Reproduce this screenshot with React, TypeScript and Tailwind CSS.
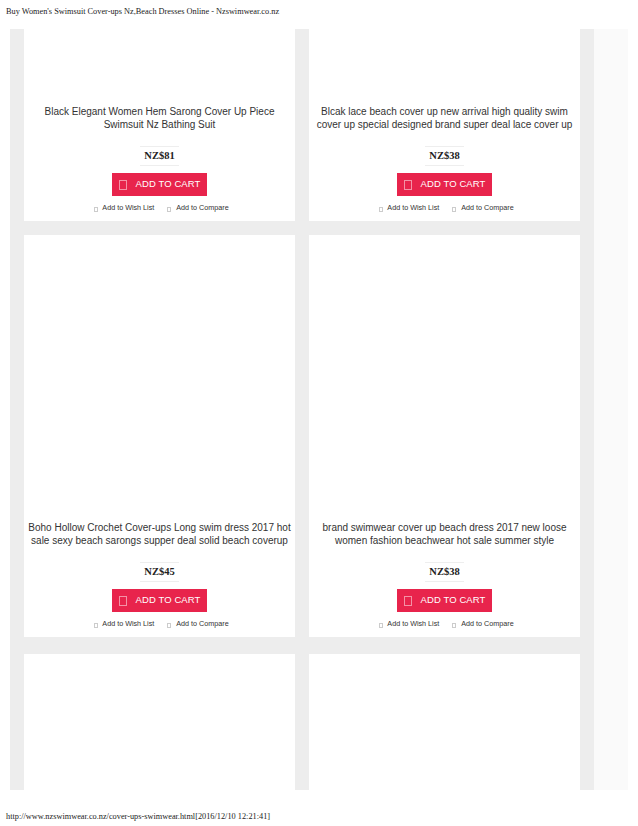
import React from 'react';

interface Product {
  title: string[];
  price: string;
}

const rowOne: Product[] = [
  { title: ['Black Elegant Women Hem Sarong Cover Up Piece', 'Swimsuit Nz Bathing Suit'], price: 'NZ$81' },
  { title: ['Blcak lace beach cover up new arrival high quality swim', 'cover up special designed brand super deal lace cover up'], price: 'NZ$38' },
];

const rowTwo: Product[] = [
  { title: ['Boho Hollow Crochet Cover-ups Long swim dress 2017 hot', 'sale sexy beach sarongs supper deal solid beach coverup'], price: 'NZ$45' },
  { title: ['brand swimwear cover up beach dress 2017 new loose', 'women fashion beachwear hot sale summer style'], price: 'NZ$38' },
];

function ProductCard({ product, imageHeight }: { product: Product; imageHeight: string }) {
  return (
    <div className="bg-white flex flex-col items-center pb-[7px]">
      {/* product photo area is blank in the capture */}
      <div className={`w-full ${imageHeight}`} />
      <div className="text-[10px] leading-[12.5px] text-[#333] text-center whitespace-nowrap font-['Liberation_Sans',Arial,sans-serif]">
        {product.title.map((line) => (
          <div key={line}>{line}</div>
        ))}
      </div>
      <div className="mt-[15px] px-[4px] h-[20px] flex items-center border-y border-[#eeeeee] font-['Liberation_Serif','Times_New_Roman',serif] font-bold text-[10.5px] text-[#222]">
        {product.price}
      </div>
      <button className="mt-[7px] w-[95px] h-[23px] bg-[#e8244c] text-white flex items-center justify-center gap-[9px] font-['Liberation_Sans',Arial,sans-serif] text-[9.5px] tracking-[0.1px]">
        <span className="w-[8px] h-[10px] border border-white/50" />
        <span>ADD TO CART</span>
      </button>
      <div className="mt-[6px] flex items-center gap-[13px] text-[7.2px] text-[#333] font-['Liberation_Sans',Arial,sans-serif] leading-[12px] pl-[4px]">
        <span className="flex items-center gap-[4px]">
          <span className="w-[4px] h-[5px] border border-[#ccc] mt-[2px]" />
          Add to Wish List
        </span>
        <span className="flex items-center gap-[5px]">
          <span className="w-[4px] h-[5px] border border-[#ccc] mt-[2px]" />
          Add to Compare
        </span>
      </div>
    </div>
  );
}

export default function App() {
  return (
    <div className="w-[638px] h-[826px] bg-white flex flex-col">
      <div className="pl-[6px] pt-[6px] h-[29px] text-[8.3px] leading-[11px] text-[#222] font-['Liberation_Serif','Times_New_Roman',serif]">
        Buy Women's Swimsuit Cover-ups Nz,Beach Dresses Online - Nzswimwear.co.nz
      </div>

      <div className="flex h-[761px]">
        <div className="ml-[10px] w-[584px] bg-[#ededed] px-[14px] overflow-hidden">
          <div className="grid grid-cols-2 gap-x-[14px] gap-y-[14px]">
            {rowOne.map((p) => (
              <ProductCard key={p.title[0]} product={p} imageHeight="h-[77px]" />
            ))}
            {rowTwo.map((p) => (
              <ProductCard key={p.title[0]} product={p} imageHeight="h-[287px]" />
            ))}
          </div>
          <div className="mt-[17px] grid grid-cols-2 gap-x-[14px]">
            <div className="bg-white h-[136px]" />
            <div className="bg-white h-[136px]" />
          </div>
        </div>
        <div className="w-[34px] bg-[#fafafa]" />
      </div>

      <div className="pl-[6px] pt-[21px] text-[8.3px] leading-[11px] text-[#222] font-['Liberation_Serif','Times_New_Roman',serif]">
        http://www.nzswimwear.co.nz/cover-ups-swimwear.html[2016/12/10 12:21:41]
      </div>
    </div>
  );
}
